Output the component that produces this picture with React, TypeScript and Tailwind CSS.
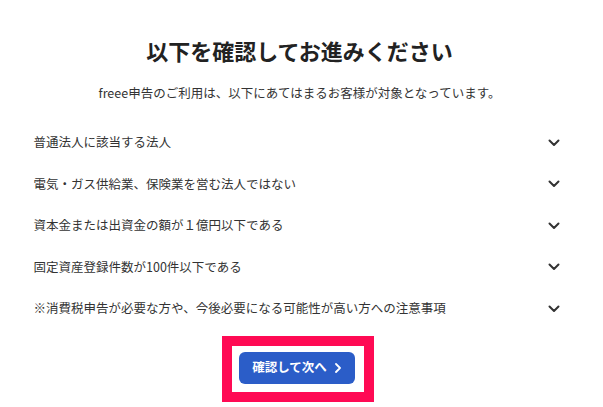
import React from 'react'

const items = [
  '普通法人に該当する法人',
  '電気・ガス供給業、保険業を営む法人ではない',
  '資本金または出資金の額が１億円以下である',
  '固定資産登録件数が100件以下である',
  '※消費税申告が必要な方や、今後必要になる可能性が高い方への注意事項',
]

function Chevron() {
  return (
    <svg width="12" height="8" viewBox="0 0 12 8" fill="none">
      <path d="M1.5 1.5 L6 6 L10.5 1.5" stroke="#333" strokeWidth="2" strokeLinecap="round" strokeLinejoin="round" />
    </svg>
  )
}

export default function App() {
  return (
    <div
      className="w-[603px] h-[407px] bg-white text-[#333] overflow-hidden flex flex-col items-center"
      style={{ fontFamily: '"Noto Sans CJK JP", "Noto Sans", sans-serif' }}
    >
      <h1 className="mt-[34px] h-[32px] leading-[32px] text-[22px] font-bold text-[#222] mr-[4px]">
        以下を確認してお進みください
      </h1>
      <p className="mt-[17px] h-[20px] leading-[20px] text-[12.5px] mr-[4px]">
        freee申告のご利用は、以下にあてはまるお客様が対象となっています。
      </p>
      <div className="mt-[19px] w-[560px] flex flex-col">
        {items.map((t) => (
          <div key={t} className="h-[41.5px] flex items-center justify-between pl-[12px] pr-[22px]">
            <span className="text-[12.5px]">{t}</span>
            <Chevron />
          </div>
        ))}
      </div>
      <div className="mt-[6px] mr-[8px] border-[10px] border-[#ff0a54] pt-[6px] pb-[8px] pl-[7px] pr-[9px]">
        <button className="h-[32px] w-[116px] rounded-[6px] bg-[#2b5dc8] text-white text-[12.5px] font-bold flex items-center justify-center gap-[8px]">
          <span>確認して次へ</span>
          <svg width="6" height="10" viewBox="0 0 6 10" fill="none">
            <path d="M1 1 L5 5 L1 9" stroke="white" strokeWidth="1.8" strokeLinecap="round" strokeLinejoin="round" />
          </svg>
        </button>
      </div>
    </div>
  )
}
